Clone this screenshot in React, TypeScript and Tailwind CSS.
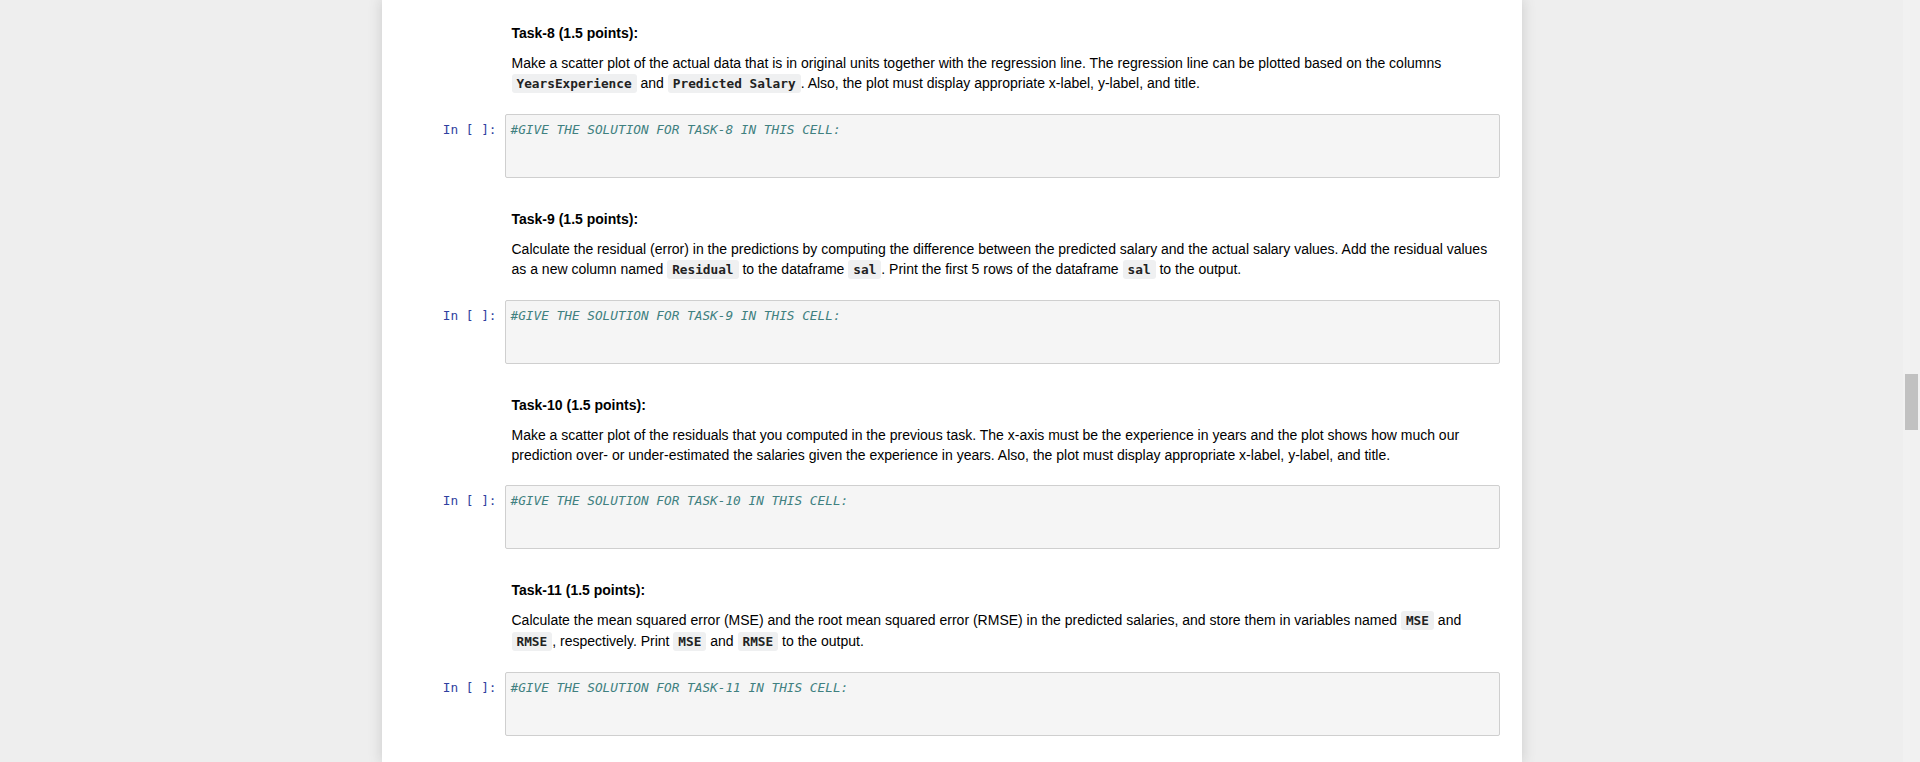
const tasks = [
  {
    title: "Task-8 (1.5 points):",
    cell: "#GIVE THE SOLUTION FOR TASK-8 IN THIS CELL:",
    lines: [
      ["Make a scatter plot of the actual data that is in original units together with the regression line. The regression line can be plotted based on the columns"],
      [{ code: "YearsExperience" }, " and ", { code: "Predicted Salary" }, ". Also, the plot must display appropriate x-label, y-label, and title."],
    ],
  },
  {
    title: "Task-9 (1.5 points):",
    cell: "#GIVE THE SOLUTION FOR TASK-9 IN THIS CELL:",
    lines: [
      ["Calculate the residual (error) in the predictions by computing the difference between the predicted salary and the actual salary values. Add the residual values"],
      ["as a new column named ", { code: "Residual" }, " to the dataframe ", { code: "sal" }, ". Print the first 5 rows of the dataframe ", { code: "sal" }, " to the output."],
    ],
  },
  {
    title: "Task-10 (1.5 points):",
    cell: "#GIVE THE SOLUTION FOR TASK-10 IN THIS CELL:",
    lines: [
      ["Make a scatter plot of the residuals that you computed in the previous task. The x-axis must be the experience in years and the plot shows how much our"],
      ["prediction over- or under-estimated the salaries given the experience in years. Also, the plot must display appropriate x-label, y-label, and title."],
    ],
  },
  {
    title: "Task-11 (1.5 points):",
    cell: "#GIVE THE SOLUTION FOR TASK-11 IN THIS CELL:",
    lines: [
      ["Calculate the mean squared error (MSE) and the root mean squared error (RMSE) in the predicted salaries, and store them in variables named ", { code: "MSE" }, " and"],
      [{ code: "RMSE" }, ", respectively. Print ", { code: "MSE" }, " and ", { code: "RMSE" }, " to the output."],
    ],
  },
];

type Piece = string | { code: string };

function Line({ pieces }: { pieces: Piece[] }) {
  return (
    <div className="whitespace-pre">
      {pieces.map((p, i) =>
        typeof p === "string" ? (
          <span key={i}>{p}</span>
        ) : (
          <code
            key={i}
            className="rounded-[3px] bg-[#eff0f1] px-[5px] py-[2px] font-['DejaVu_Sans_Mono',monospace] text-[12.75px] font-bold text-[#222]"
          >
            {p.code}
          </code>
        )
      )}
    </div>
  );
}

export default function App() {
  return (
    <div className="flex h-[762px] w-full overflow-hidden bg-[#eeeeee] font-['Liberation_Sans',Arial,sans-serif] text-[14px] leading-5 text-black">
      <div className="flex flex-1 justify-center">
        <div className="w-[1140px] bg-white pt-[23px] shadow-[0_0_12px_1px_rgba(87,87,87,0.2)]">
          {tasks.map((t) => (
            <section key={t.title} className="mb-[31px]">
              {/* markdown cell */}
              <div className="pl-[130px]">
                <p className="font-bold">{t.title}</p>
                <div className="mt-[10px]">
                  {t.lines.map((l, i) => (
                    <Line key={i} pieces={l as Piece[]} />
                  ))}
                </div>
              </div>

              {/* code cell */}
              <div className="mt-5 flex pr-[22px]">
                <div className="w-[123px] shrink-0 pr-2 pt-[7px] text-right font-['DejaVu_Sans_Mono',monospace] text-[12.75px] leading-[17px] text-[#303f9f]">
                  In [ ]:
                </div>
                <div className="h-[64px] flex-1 rounded-[2px] border border-[#cfcfcf] bg-[#f5f5f5] px-[5px] pt-[6px] font-['DejaVu_Sans_Mono',monospace] text-[12.75px] leading-[17px] italic text-[#408080]">
                  {t.cell}
                </div>
              </div>
            </section>
          ))}
        </div>
      </div>

      {/* scrollbar */}
      <div className="w-[17px] shrink-0 bg-[#f1f1f1] px-[2px] pt-[374px]">
        <div className="h-[56px] bg-[#c1c1c1]" />
      </div>
    </div>
  );
}
